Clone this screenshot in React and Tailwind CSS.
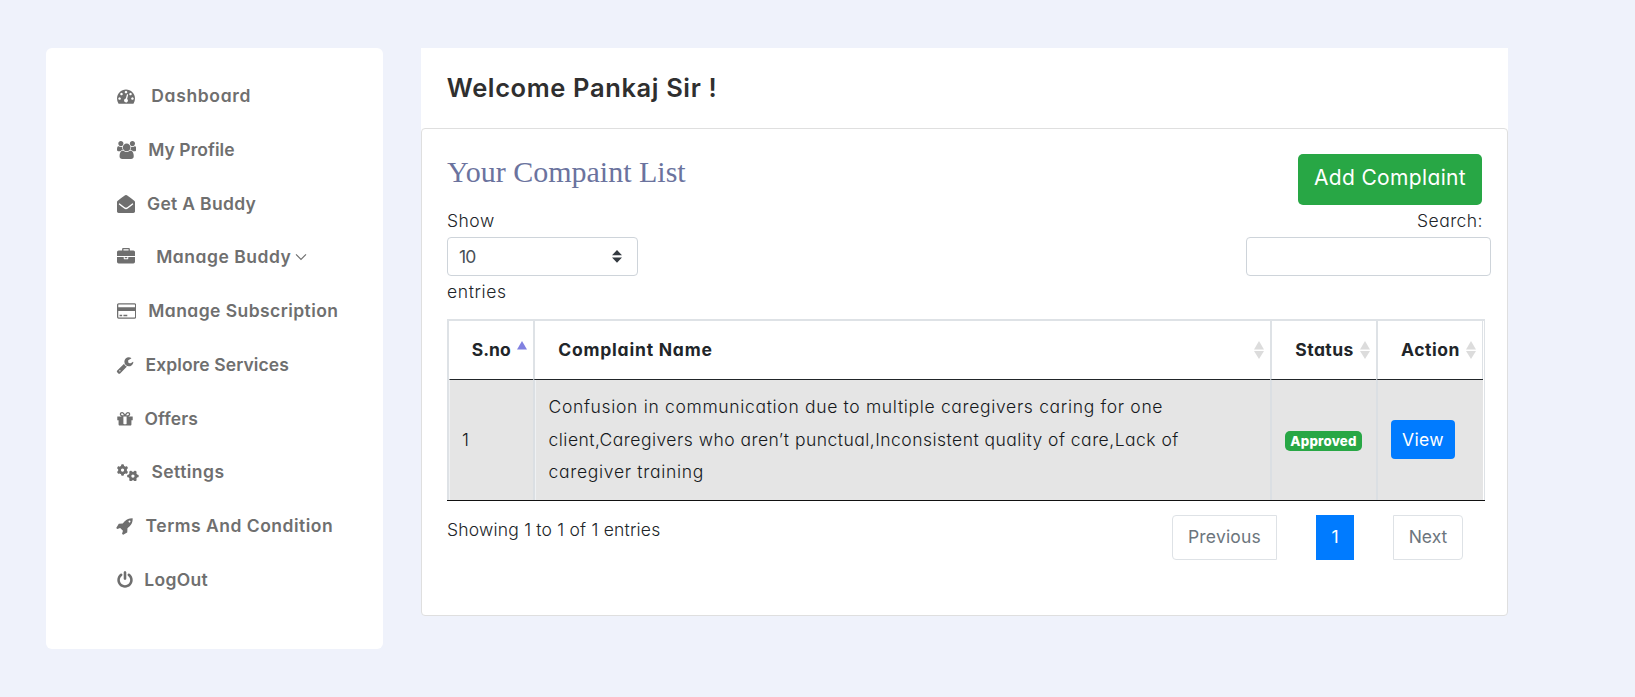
import { FaGears } from "react-icons/fa6";

function Glyph({ w = 1792, d }) {
  return (
    <svg viewBox={`0 0 ${w} 1792`} className="h-[18px] w-auto shrink-0 fill-current">
      <path d={d} fillRule="nonzero" />
    </svg>
  );
}

const icons = {
  gauge:
    "M384 1152q0-53-37.5-90.5t-90.5-37.5-90.5 37.5-37.5 90.5 37.5 90.5 90.5 37.5 90.5-37.5 37.5-90.5zm192-448q0-53-37.5-90.5t-90.5-37.5-90.5 37.5-37.5 90.5 37.5 90.5 90.5 37.5 90.5-37.5 37.5-90.5zm428 481l101-382q6-26-7.5-48.5t-38.5-29.5-48 6.5-30 39.5l-101 382q-60 5-107 43.5t-63 98.5q-20 77 20 146t117 89 146-20 89-117q16-60-6-117t-72-91zm660-33q0-53-37.5-90.5t-90.5-37.5-90.5 37.5-37.5 90.5 37.5 90.5 90.5 37.5 90.5-37.5 37.5-90.5zm-640-640q0-53-37.5-90.5t-90.5-37.5-90.5 37.5-37.5 90.5 37.5 90.5 90.5 37.5 90.5-37.5 37.5-90.5zm448 192q0-53-37.5-90.5t-90.5-37.5-90.5 37.5-37.5 90.5 37.5 90.5 90.5 37.5 90.5-37.5 37.5-90.5zm320 448q0 261-141 483-19 29-54 29h-1402q-35 0-54-29-141-221-141-483 0-182 71-348t191-286 286-191 348-71 348 71 286 191 191 286 71 348z",
  users:
    "M593 896q-162 5-265 128h-134q-82 0-138-40.5t-56-118.5q0-353 124-353 6 0 43.5 21t97.5 42.5 119 21.5q67 0 133-23-5 37-5 66 0 139 81 256zm1071 637q0 120-73 189.5t-194 69.5h-874q-121 0-194-69.5t-73-189.5q0-53 3.5-103.5t14-109 26.5-108.5 43-97.5 62-81 85.5-53.5 111.5-20q10 0 43 21.5t73 48 107 48 135 21.5 135-21.5 107-48 73-48 43-21.5q61 0 111.5 20t85.5 53.5 62 81 43 97.5 26.5 108.5 14 109 3.5 103.5zm-1024-1277q0 106-75 181t-181 75-181-75-75-181 75-181 181-75 181 75 75 181zm704 384q0 159-112.5 271.5t-271.5 112.5-271.5-112.5-112.5-271.5 112.5-271.5 271.5-112.5 271.5 112.5 112.5 271.5zm576 225q0 78-56 118.5t-138 40.5h-134q-103-123-265-128 81-117 81-256 0-29-5-66 66 23 133 23 59 0 119-21.5t97.5-42.5 43.5-21q124 0 124 353zm-128-609q0 106-75 181t-181 75-181-75-75-181 75-181 181-75 181 75 75 181z",
  envelope:
    "M896 0q40 0 90 30 480 330 760 560 46 40 46 104v938q0 66-47 113t-113 47h-1472q-66 0-113-47t-47-113v-938q0-64 46-104 280-230 760-560 50-30 90-30zM256 832q-28 0-46 24l-28 44q-14 28 12 50 250 190 490 372 110 86 212 86t212-86q240-182 490-372 26-22 12-50l-28-44q-18-24-46-24-14 0-26 10l-452 344q-96 74-162 74t-162-74l-452-344q-12-10-26-10z",
  briefcase:
    "M640 256h512v-128h-512v128zm1152 640v480q0 66-47 113t-113 47h-1472q-66 0-113-47t-47-113v-480h672v160q0 26 19 45t45 19h320q26 0 45-19t19-45v-160h672zm-768 0v128h-256v-128h256zm768-480v384h-1792v-384q0-66 47-113t113-47h352v-160q0-40 28-68t68-28h576q40 0 68 28t28 68v160h352q66 0 113 47t47 113z",
  card:
    "M1760 128q66 0 113 47t47 113v1216q0 66-47 113t-113 47h-1600q-66 0-113-47t-47-113v-1216q0-66 47-113t113-47h1600zm-1600 128q-13 0-22.5 9.5t-9.5 22.5v224h1664v-224q0-13-9.5-22.5t-22.5-9.5h-1600zm1600 1280q13 0 22.5-9.5t9.5-22.5v-608h-1664v608q0 13 9.5 22.5t22.5 9.5h1600zm-1504-128v-128h256v128h-256zm384 0v-128h384v128h-384z",
  wrench:
    "M448 1472q0-26-19-45t-45-19-45 19-19 45 19 45 45 19 45-19 19-45zm644-420l-682 682q-37 37-90 37-52 0-91-37l-106-108q-38-36-38-90 0-53 38-91l681-681q39 98 114.5 173.5t173.5 114.5zm634-435q0 39-23 106-47 134-164.5 217.5t-258.5 83.5q-185 0-316.5-131.5t-131.5-316.5 131.5-316.5 316.5-131.5q58 0 121.5 16.5t107.5 46.5q16 11 16 28t-16 28l-293 169v224l193 107q5-3 79-48.5t135.5-81 70.5-35.5q15 0 23.5 10t8.5 25z",
  gift:
    "M1056 1356v-716h-320v716q0 25 18 38.5t46 13.5h192q28 0 46-13.5t18-38.5zm-456-844h195l-126-161q-26-31-69-31-40 0-68 28t-28 68 28 68 68 28zm688-96q0-40-28-68t-68-28q-43 0-69 31l-125 161h194q40 0 68-28t28-68zm376 256v320q0 14-9 23t-23 9h-96v416q0 40-28 68t-68 28h-1088q-40 0-68-28t-28-68v-416h-96q-14 0-23-9t-9-23v-320q0-14 9-23t23-9h440q-93 0-158.5-65.5t-65.5-158.5 65.5-158.5 158.5-65.5q107 0 168 77l128 165 128-165q61-77 168-77 93 0 158.5 65.5t65.5 158.5-65.5 158.5-158.5 65.5h440q14 0 23 9t9 23z",
  rocket:
    "M1440 448q0-40-28-68t-68-28-68 28-28 68 28 68 68 28 68-28 28-68zm224-288q0 249-75.5 430.5t-253.5 360.5q-81 80-195 176l-20 379q-2 16-16 26l-384 224q-7 4-16 4-12 0-23-9l-64-64q-13-14-8-32l85-276-281-281-276 85q-3 1-9 1-14 0-23-9l-64-64q-17-19-5-39l224-384q10-14 26-16l379-20q96-114 176-195 188-187 358-258t431-71q14 0 24 9.5t10 22.5z",
  power:
    "M1664 896q0 156-61 298t-164 245-245 164-298 61-298-61-245-164-164-245-61-298q0-182 80.5-343t226.5-270q43-32 95.5-25t83.5 50q32 42 24.5 94.5t-49.5 84.5q-98 74-151.5 181t-53.5 228q0 104 40.5 198.5t109.5 163.5 163.5 109.5 198.5 40.5 198.5-40.5 163.5-109.5 109.5-163.5 40.5-198.5q0-121-53.5-228t-151.5-181q-42-32-49.5-84.5t24.5-94.5q31-43 84-50t95 25q146 109 226.5 270t80.5 343zm-640-768v640q0 52-38 90t-90 38-90-38-38-90v-640q0-52 38-90t90-38 90 38 38 90z",
};

const menu = [
  { label: "Dashboard", icon: <Glyph d={icons.gauge} />, slot: "w-[34.3px] pb-px", text: "tracking-[0.65px]" },
  { label: "My Profile", icon: <Glyph w={1920} d={icons.users} />, slot: "w-[31.2px]", text: "tracking-[0.05px]" },
  { label: "Get A Buddy", icon: <Glyph d={icons.envelope} />, slot: "w-[30px]", text: "tracking-[0.32px]" },
  { label: "Manage Buddy", icon: <Glyph d={icons.briefcase} />, slot: "w-[39.2px]", text: "tracking-[0.52px]", chevron: true },
  { label: "Manage Subscription", icon: <Glyph w={1920} d={icons.card} />, slot: "w-[31.2px] pb-px", text: "tracking-[0.44px]" },
  { label: "Explore Services", icon: <Glyph d={icons.wrench} />, slot: "-ml-px w-[29.5px]", text: "tracking-[0.09px]" },
  { label: "Offers", icon: <Glyph d={icons.gift} />, slot: "-ml-px w-[28.5px]", text: "tracking-[0.12px]" },
  { label: "Settings", icon: <FaGears className="h-[17.5px] w-[22px] shrink-0" />, slot: "w-[34.4px]", text: "tracking-[0.47px]" },
  { label: "Terms And Condition", icon: <Glyph d={icons.rocket} />, slot: "-ml-px w-[29.6px]", text: "tracking-[0.5px]" },
  { label: "LogOut", icon: <Glyph d={icons.power} />, slot: "-ml-px w-[28.3px]", text: "tracking-[0.3px]" },
];

function Sidebar() {
  return (
    <nav className="h-[601px] w-[337px] shrink-0 rounded-md bg-white pl-[71px] pt-[21.2px] text-[17.5px] font-semibold text-[#6f6f6f]">
      {menu.map((m) => (
        <a key={m.label} className="flex h-[53.75px] items-center whitespace-nowrap">
          <span className={`flex shrink-0 ${m.slot}`}>{m.icon}</span>
          <span className={m.text}>{m.label}</span>
          {m.chevron && (
            <svg viewBox="0 0 12 8" className="ml-[3.5px] h-2 w-3 fill-none stroke-current stroke-[1.1]">
              <path d="M1 1.3 6 6.5 11 1.3" />
            </svg>
          )}
        </a>
      ))}
    </nav>
  );
}

function SortArrows({ asc = false }) {
  return (
    <svg viewBox="0 0 10 18" className={`h-[18px] w-[10px] shrink-0 ${asc ? "fill-[#8080e0]" : "fill-[#dcdcdc]"}`}>
      <path d="M5 0 10 8.5H0z" />
      {!asc && <path d="M0 10h10L5 18z" />}
    </svg>
  );
}

function HeadCell({ label, text, asc, className }) {
  return (
    <div className={`flex items-center justify-between border-[#dee2e6] pr-[6px] font-bold ${className}`}>
      <span className={text}>{label}</span>
      <SortArrows asc={asc} />
    </div>
  );
}

function ComplaintTable() {
  return (
    <div className="mt-[14px] w-[1038px] text-[17.5px] text-[#212529]">
      <div className="border-r border-t-2 border-[#dee2e6] pr-px">
        <div className="grid h-[58px] grid-cols-[86px_737px_106px_107px]">
          <HeadCell label="S.no" text="tracking-[0.03px]" asc className="border-l-2 pl-[22.7px]" />
          <HeadCell label="Complaint Name" text="tracking-[0.78px]" className="border-l-2 pl-[23.3px]" />
          <HeadCell label="Status" text="tracking-[0.45px]" className="border-l-2 pl-[23.3px]" />
          <HeadCell label="Action" text="tracking-[0.55px]" className="border-l-2 border-r pl-[23px]" />
        </div>
        <div className="grid h-[121px] grid-cols-[86px_737px_106px_107px] font-light text-[#16191c]">
          <div className="border-l-2 border-[#dee2e6]">
            <div className="flex h-full items-center border-l border-t border-l-[#f0f2f4] border-t-[#212529] bg-[#e5e5e5] pl-3">1</div>
          </div>
          <div className="flex items-center border-l-2 border-t border-l-[#dbdfe3] border-t-[#212529] bg-[#e5e5e5]">
            <div className="flex h-full flex-col justify-center whitespace-nowrap border-l border-[#eff1f3] pl-[12.5px] leading-[32.6px]">
              <span className="tracking-[0.67px]">Confusion in communication due to multiple caregivers caring for one</span>
              <span className="tracking-[0.475px]">client,Caregivers who aren’t punctual,Inconsistent quality of care,Lack of</span>
              <span className="tracking-[0.7px]">caregiver training</span>
            </div>
          </div>
          <div className="flex items-center border-l-2 border-t border-l-[#dbdfe3] border-t-[#212529] bg-[#e5e5e5] pl-[13px] pt-0.5">
            <span className="flex h-5 w-[77px] items-center justify-center rounded-[5px] bg-[#28a745] text-[13.3px] font-extrabold tracking-[0.2px] text-white">
              Approved
            </span>
          </div>
          <div className="flex items-center border-l-2 border-t border-l-[#dbdfe3] border-t-[#212529] bg-[#e5e5e5] pb-0.5 pl-[13px]">
            <button className="flex h-[39px] w-16 items-center justify-center rounded bg-[#007bff] pt-px font-normal tracking-[0.4px] text-white">
              View
            </button>
          </div>
        </div>
      </div>
      <div className="h-px bg-[#111111]" />
    </div>
  );
}

function Footer() {
  return (
    <div className="flex justify-between pr-[19px] pt-[14px] text-[17.5px] font-light">
      <div className="pt-0.5 tracking-[0.2px] text-[#212529]">Showing 1 to 1 of 1 entries</div>
      <div className="flex h-[45px] gap-[39px] text-[#6c757d]">
        <span className="flex w-[105px] items-center justify-center rounded-l border border-[#dee2e6] pb-px font-normal tracking-[0.2px]">Previous</span>
        <span className="flex w-[38px] items-center justify-center bg-[#007bff] pb-px font-normal text-white">1</span>
        <span className="flex w-[70px] items-center justify-center rounded-r border border-[#dee2e6] pb-px font-normal">Next</span>
      </div>
    </div>
  );
}

export default function App() {
  return (
    <div className="flex h-[697px] gap-[38px] overflow-hidden bg-[#eff2fb] pl-[46px] pt-12 font-['Inter',sans-serif] leading-[26px] text-[#333333] [font-feature-settings:'cv11']">
      <Sidebar />
      <main className="w-[1087px]">
        <header className="flex h-20 items-center bg-white pl-[25.8px]">
          <h1 className="text-[25.5px] font-semibold tracking-[0.62px] text-[#2f2f2f] [font-feature-settings:normal]">Welcome Pankaj Sir !</h1>
        </header>
        <div className="bg-linear-to-b from-white from-50% to-transparent to-50%">
          <section className="h-[487.5px] rounded border border-[#dfdfdf] bg-white px-[25px] pt-[25px]">
            <div className="flex h-[51px] items-start justify-between">
              <h2 className="font-['Liberation_Serif',serif] text-[30px] leading-9 text-[#6b739e]">Your Compaint List</h2>
              <button className="flex h-[51px] w-[184px] items-center justify-center rounded-[5px] bg-[#28a745] pb-[3px] text-[21px] tracking-[0.35px] text-white">
                Add Complaint
              </button>
            </div>
            <div className="flex justify-between pt-[3px] text-[17.5px] font-light text-[#212529]">
              <div className="flex flex-col gap-[3px]">
                <span className="tracking-[0.5px]">Show</span>
                <div className="flex h-[39px] w-[191px] items-center justify-between rounded border border-[#ced4da] bg-white pl-[11px] pr-[15px] text-[#495057]">
                  <span className="font-normal tracking-[-0.8px]">10</span>
                  <svg viewBox="0 0 10 13" className="h-[13px] w-[10px] fill-[#343a40]">
                    <path d="M5 0 10 5.2H0zM0 7.5h10L5 12.7z" />
                  </svg>
                </div>
                <span className="tracking-[0.62px]">entries</span>
              </div>
              <div className="flex flex-col items-end gap-[3px]">
                <span className="-mr-px tracking-[0.45px]">Search:</span>
                <input aria-label="Search" className="-mr-[9px] h-[39px] w-[245px] rounded border border-[#ced4da] bg-white" />
              </div>
            </div>
            <ComplaintTable />
            <Footer />
          </section>
        </div>
      </main>
    </div>
  );
}
